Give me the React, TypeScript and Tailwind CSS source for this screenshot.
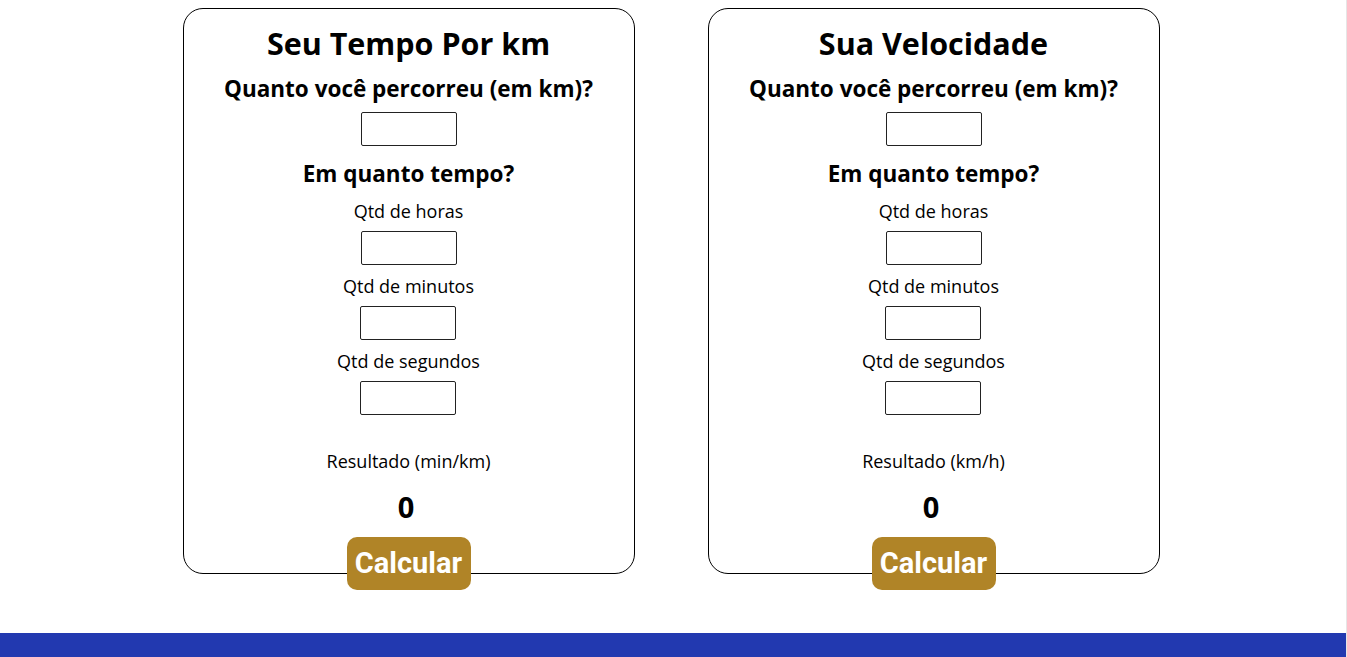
const labels = ['Qtd de horas', 'Qtd de minutos', 'Qtd de segundos'];

function Field() {
  return <input type="text" className="block w-[96px] h-[34px] border border-[#222] rounded-[2px] bg-white outline-none" />;
}

function Card({ title, unit }: { title: string; unit: string }) {
  return (
    <div className="w-[452px] h-[566px] border border-black rounded-[20px] bg-white flex flex-col items-center text-black">
      <h1 className="mt-[15px] h-[38px] leading-[38px] text-[30.5px] font-bold">{title}</h1>
      <h2 className="mt-[11px] h-[32px] leading-[32px] text-[22.5px] font-bold">Quanto você percorreu (em km)?</h2>
      <div className="mt-[7px]">
        <Field />
      </div>
      <h3 className="mt-[13px] h-[30px] leading-[30px] text-[22.5px] font-bold">Em quanto tempo?</h3>
      {labels.map((l, i) => (
        <div key={l} className={`flex flex-col items-center ${i === 0 ? 'mt-[10px]' : 'mt-[9px]'}`}>
          <span className="h-[24px] leading-[24px] text-[18px]">{l}</span>
          <div className="mt-[8px]">
            <Field />
          </div>
        </div>
      ))}
      <p className="mt-[34px] h-[24px] leading-[24px] text-[18px]">Resultado ({unit})</p>
      <p className="mt-[19px] mr-[5px] h-[30px] leading-[30px] text-[29px] font-bold">0</p>
      <button className="mt-[15px] shrink-0 w-[124px] h-[53px] rounded-[10px] bg-[#b08427] text-white text-[29px] font-bold font-['Roboto',sans-serif]">
        Calcular
      </button>
    </div>
  );
}

export default function App() {
  return (
    <div className="flex h-[657px] w-full bg-white font-['Open_Sans',sans-serif] overflow-hidden">
      <div className="flex-1 flex flex-col">
        <main className="flex justify-center gap-[73px] pt-[8px] pr-[4px] h-[633px] shrink-0">
          <Card title="Seu Tempo Por km" unit="min/km" />
          <Card title="Sua Velocidade" unit="km/h" />
        </main>
        <footer className="flex-1 bg-[#2239b0]" />
      </div>
      <div className="w-px bg-[#e6e6e6]" />
    </div>
  );
}
